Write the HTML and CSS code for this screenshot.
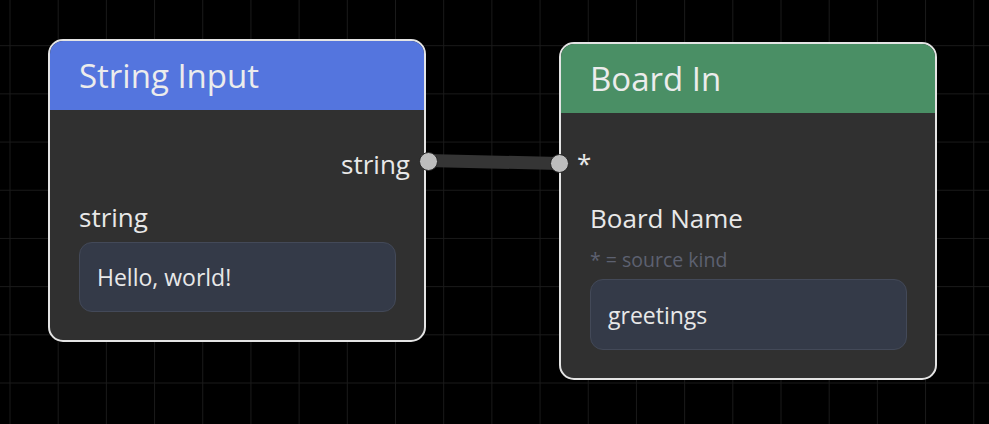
FILE: index.html
```html
<!DOCTYPE html>
<html>
<head>
<meta charset="utf-8">
<link rel="stylesheet" href="styles.css">
</head>
<body>
<div class="canvas">
  <svg class="wire" width="989" height="424" viewBox="0 0 989 424">
    <line x1="427" y1="160.5" x2="559" y2="163.5" stroke="#353535" stroke-width="13"/>
  </svg>

  <div class="node node-string">
    <div class="node-header header-blue">String Input</div>
    <div class="node-body">
      <div class="port-row port-out">
        <span class="port-label">string</span>
        <span class="port port-right"></span>
      </div>
      <div class="field-label">string</div>
      <div class="field-input">Hello, world!</div>
    </div>
  </div>

  <div class="node node-board">
    <div class="node-header header-green">Board In</div>
    <div class="node-body">
      <div class="port-row port-in">
        <span class="port port-left"></span>
        <span class="port-label star">*</span>
      </div>
      <div class="field-label">Board Name</div>
      <div class="field-hint">* = source kind</div>
      <div class="field-input">greetings</div>
    </div>
  </div>
</div>
</body>
</html>
```

FILE: styles.css
```css
html, body {
  margin: 0;
  padding: 0;
  background: #000;
}

.canvas {
  position: relative;
  width: 989px;
  height: 424px;
  overflow: hidden;
  background-color: #000;
  background-image:
    linear-gradient(to right, #1a1a1a 0, #1a1a1a 1.2px, transparent 1.2px),
    linear-gradient(to bottom, #1a1a1a 0, #1a1a1a 1.2px, transparent 1.2px);
  background-size: 48.2px 48.2px;
  background-position: 9.5px -3px;
  font-family: "Open Sans", "Noto Sans", sans-serif;
  color: #e8e8e8;
}

.wire {
  position: absolute;
  left: 0;
  top: 0;
  z-index: 1;
}

.node {
  position: absolute;
  box-sizing: border-box;
  width: 378px;
  border: 2px solid #e4e4e4;
  border-radius: 15px;
  background: #303030;
}

.node-string {
  left: 48px;
  top: 39px;
}

.node-board {
  left: 559px;
  top: 42px;
}

.node-header {
  height: 69px;
  box-sizing: border-box;
  padding: 0 29px;
  display: flex;
  align-items: center;
  font-size: 33px;
  border-radius: 13px 13px 0 0;
  color: #ececec;
}

.header-blue {
  background: #5475de;
}

.header-green {
  background: #4a8f65;
}

.node-body {
  padding: 0 28px 28px 29px;
  display: flex;
  flex-direction: column;
}

.port-row {
  position: relative;
  height: 40px;
  margin-top: 31px;
  display: flex;
  align-items: center;
  font-size: 26px;
}

.port-out {
  justify-content: flex-end;
  margin-right: -14px;
}

.node-board .port-row {
  margin-top: 30px;
}

.port-label {
  line-height: 40px;
  position: relative;
  top: 3px;
}

.star {
  position: relative;
  left: -13px;
  top: 0;
}

.port {
  position: absolute;
  top: 50%;
  width: 19px;
  height: 19px;
  margin-top: -9.5px;
  box-sizing: border-box;
  border-radius: 50%;
  background: #bdbdbd;
  border: 1px solid #262626;
  z-index: 2;
}

.port-right {
  right: -28px;
}

.port-left {
  left: -40.5px;
}

.field-label {
  margin-top: 19px;
  font-size: 26px;
  line-height: 34px;
}

.node-board .field-label {
  margin-top: 18px;
}

.field-hint {
  font-size: 19.5px;
  line-height: 26px;
  color: #5d6170;
  margin-top: 12px;
}

.field-input {
  margin-top: 8px;
  height: 70px;
  box-sizing: border-box;
  border: 1px solid #434958;
  border-radius: 13px;
  background: #343a48;
  display: flex;
  align-items: center;
  padding: 0 17px;
  font-size: 23px;
  color: #e8e8e8;
}

.node-board .field-input {
  height: 71px;
  margin-top: 6px;
}
```
